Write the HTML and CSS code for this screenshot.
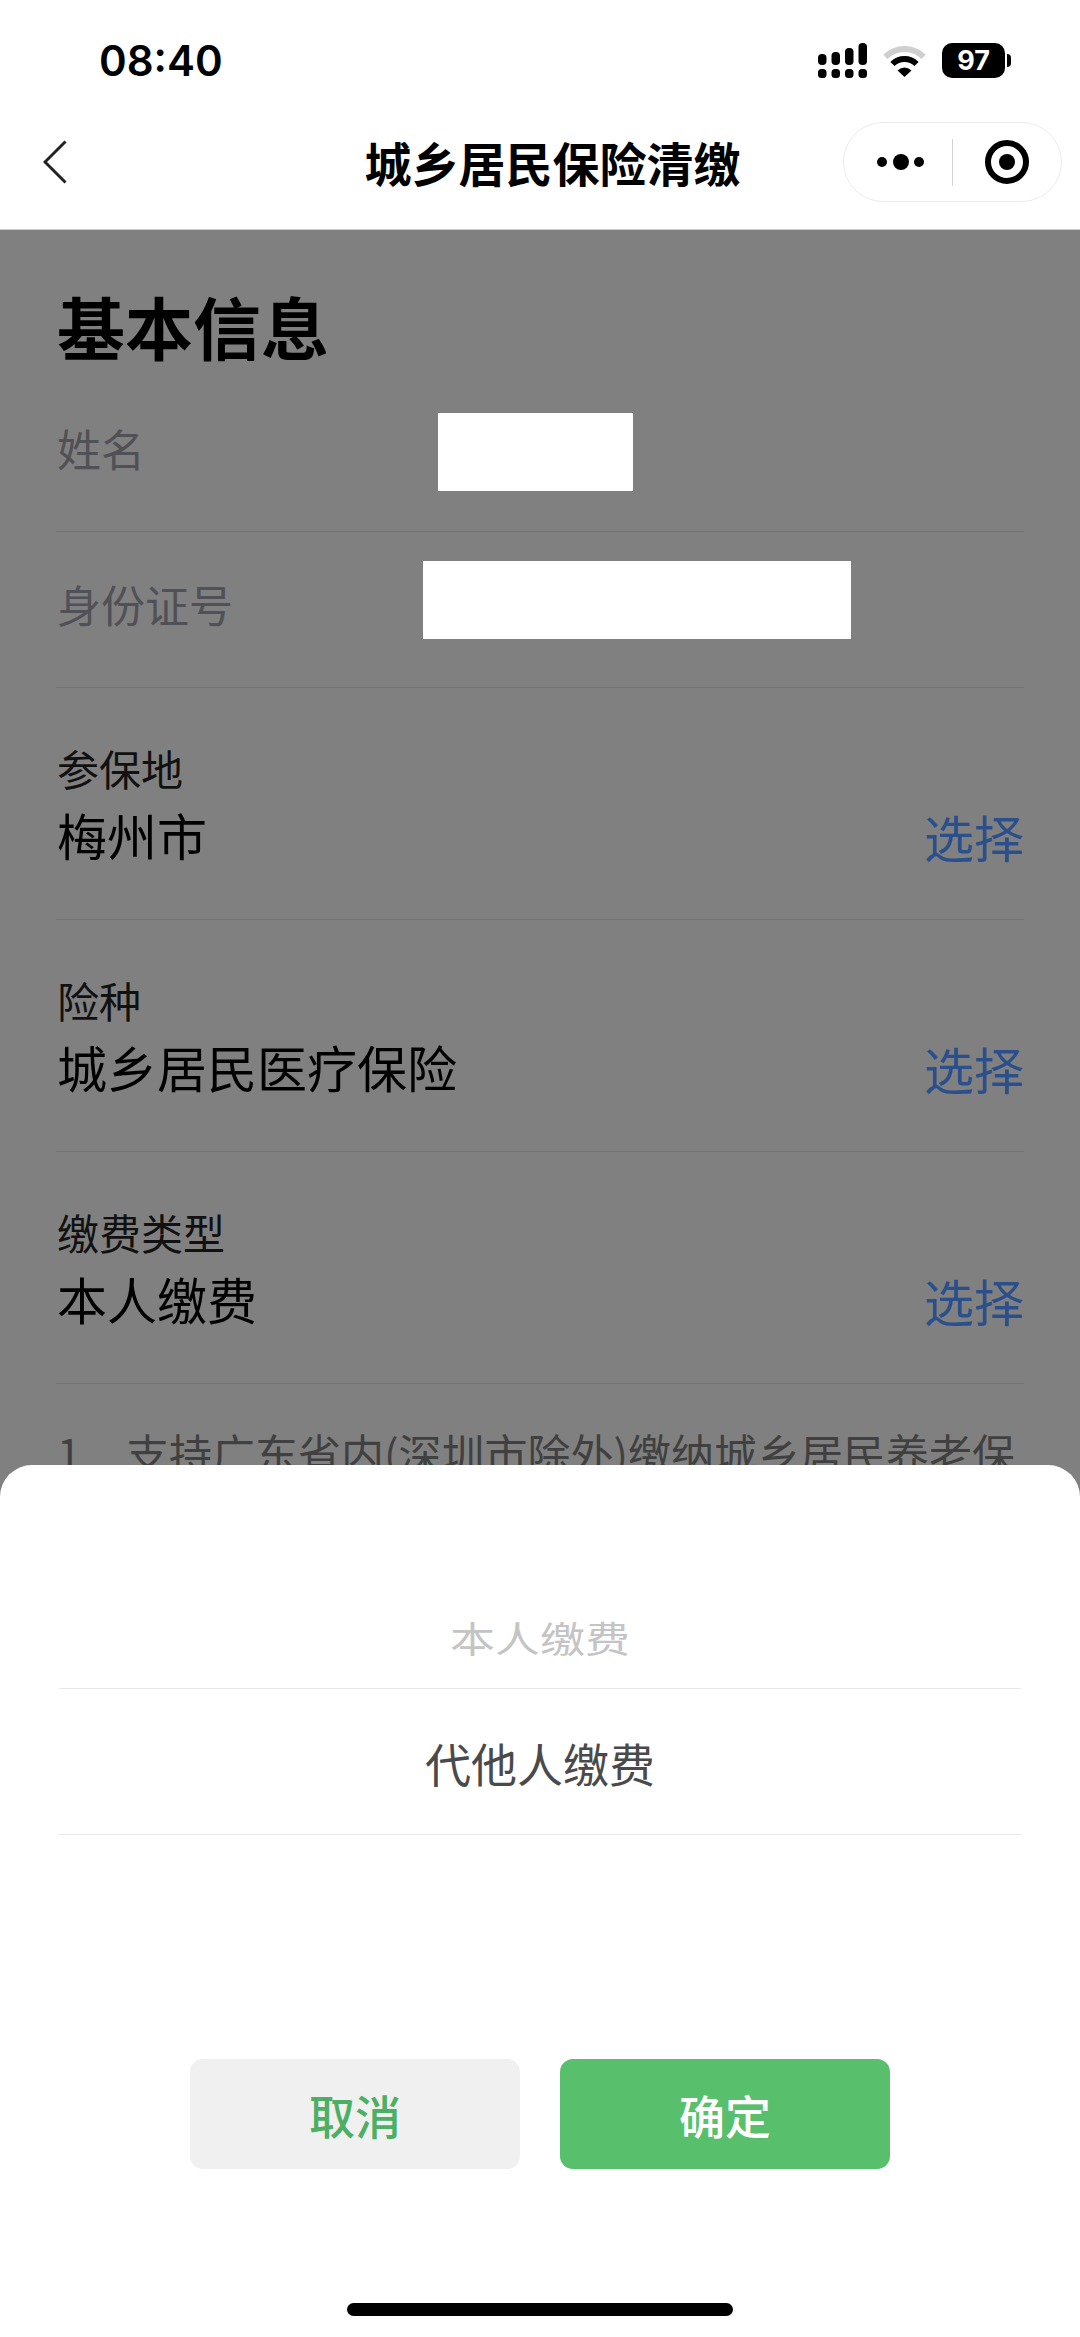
FILE: index.html
```html
<!DOCTYPE html>
<html lang="zh-CN">
<head>
<meta charset="utf-8">
<title>城乡居民保险清缴</title>
<link rel="stylesheet" href="styles.css">
</head>
<body>
<div class="screen">
  <header class="status">
    <span class="time">08:40</span>
    <div class="status-icons">
      <svg class="signal" viewBox="0 0 49 35" aria-hidden="true">
        <rect x="0" y="11" width="8.5" height="11" rx="4"/>
        <rect x="13.5" y="9" width="8.5" height="13" rx="4"/>
        <rect x="27" y="5" width="8.5" height="17" rx="4"/>
        <rect x="40.5" y="0" width="8.5" height="22" rx="4"/>
        <rect x="0" y="26" width="8.5" height="9" rx="3.5"/>
        <rect x="13.5" y="26" width="8.5" height="9" rx="3.5"/>
        <rect x="27" y="26" width="8.5" height="9" rx="3.5"/>
        <rect x="40.5" y="26" width="8.5" height="9" rx="3.5"/>
      </svg>
      <svg class="wifi" viewBox="0 0 43 32" aria-hidden="true">
        <path class="wifi-off" d="M2.4 11.9A27 27 0 0 1 40.6 11.9"/>
        <path class="wifi-on" d="M9.5 19A17 17 0 0 1 33.5 19"/>
        <path class="wifi-dot" d="M14.5 25.5Q21.5 19.5 28.5 25.5L21.5 32Z"/>
      </svg>
      <div class="battery"><span class="battery-level">97</span></div>
      <span class="battery-nub"></span>
    </div>
  </header>

  <nav class="nav">
    <div class="nav-left">
      <svg class="back" viewBox="0 0 24 44" aria-hidden="true"><path d="M22.5 1.5L2 22L22.5 42.5"/></svg>
    </div>
    <h1 class="nav-title">城乡居民保险清缴</h1>
    <div class="nav-right">
      <div class="capsule">
        <svg class="capsule-dots" viewBox="0 0 47 16" aria-hidden="true">
          <circle cx="5" cy="8" r="5"/><circle cx="24" cy="8" r="8"/><circle cx="42" cy="8" r="5"/>
        </svg>
        <span class="capsule-divider"></span>
        <svg class="capsule-target" viewBox="0 0 44 44" aria-hidden="true">
          <circle class="ring" cx="22" cy="22" r="19"/><circle cx="22" cy="22" r="8"/>
        </svg>
      </div>
    </div>
  </nav>

  <main class="content">
    <h2 class="section-title">基本信息</h2>

    <div class="info-row">
      <span class="info-label">姓名</span>
      <span class="mask mask-name"></span>
    </div>
    <div class="info-row">
      <span class="info-label">身份证号</span>
      <span class="mask mask-id"></span>
    </div>

    <div class="select-row">
      <div class="select-main">
        <div class="select-label">参保地</div>
        <div class="select-value">梅州市</div>
      </div>
      <span class="select-action">选择</span>
    </div>
    <div class="select-row">
      <div class="select-main">
        <div class="select-label">险种</div>
        <div class="select-value">城乡居民医疗保险</div>
      </div>
      <span class="select-action">选择</span>
    </div>
    <div class="select-row">
      <div class="select-main">
        <div class="select-label">缴费类型</div>
        <div class="select-value">本人缴费</div>
      </div>
      <span class="select-action">选择</span>
    </div>

    <p class="note"><span class="note-num">1.</span>支持广东省内(深圳市除外)缴纳城乡居民养老保</p>
  </main>

  <section class="sheet">
    <div class="picker">
      <div class="option option-faded"><span class="option-squash">本人缴费</span></div>
      <div class="option option-current">代他人缴费</div>
    </div>
    <div class="actions">
      <button class="btn btn-cancel">取消</button>
      <button class="btn btn-confirm">确定</button>
    </div>
    <div class="home-bar"></div>
  </section>
</div>
</body>
</html>
```

FILE: styles.css
```css
* { box-sizing: border-box; }
html, body { margin: 0; padding: 0; }
body {
  font-family: "Noto Sans CJK SC", "Noto Sans", sans-serif;
  background: #808080;
  color: #000;
}
.screen {
  position: relative;
  width: 1080px;
  height: 2337px;
  overflow: hidden;
  display: flex;
  flex-direction: column;
}

/* status bar */
.status {
  height: 110px;
  flex: none;
  background: #fff;
  display: flex;
  justify-content: space-between;
  align-items: flex-start;
  padding: 35px 69px 0 99px;
}
.time {
  font-family: Inter, "Liberation Sans", sans-serif;
  font-size: 42px;
  font-weight: 600;
  line-height: 52px;
}
.status-icons {
  display: flex;
  align-items: center;
  margin-top: 8px;
}
.signal { width: 49px; height: 35px; fill: #000; }
.wifi { width: 43px; height: 32px; margin: 0 16px; }
.wifi-off, .wifi-on { fill: none; stroke-width: 6; }
.wifi-off { stroke: #cfcfcf; }
.wifi-on { stroke: #000; }
.wifi-dot { fill: #000; }
.battery {
  width: 63px;
  height: 35px;
  border-radius: 10px;
  background: #000;
  display: flex;
  align-items: center;
  justify-content: center;
}
.battery-level {
  font-family: Inter, "Liberation Sans", sans-serif;
  font-size: 27px;
  font-weight: 700;
  line-height: 35px;
  color: #fff;
}
.battery-nub {
  width: 4px;
  height: 13px;
  margin-left: 2px;
  background: #000;
  border-radius: 0 4px 4px 0;
}

/* navigation */
.nav {
  height: 120px;
  flex: none;
  background: #fff;
  border-bottom: 1px solid #cfcfcf;
  display: grid;
  grid-template-columns: 1fr auto 1fr;
  align-items: center;
  padding: 0 18px 15px 43px;
}
.back { display: block; width: 24px; height: 44px; fill: none; stroke: #222; stroke-width: 3; }
.nav-title {
  margin: 0;
  font-size: 47px;
  font-weight: 700;
  line-height: 60px;
  letter-spacing: 0;
}
.nav-right { display: flex; justify-content: flex-end; }
.capsule {
  width: 219px;
  height: 80px;
  border: 1px solid #ececec;
  border-radius: 40px;
  display: flex;
  align-items: center;
  padding-left: 33px;
}
.capsule-dots { width: 47px; height: 16px; fill: #000; }
.capsule-divider { width: 1px; height: 47px; background: #d4d4d4; margin: 0 32px 0 28px; }
.capsule-target { width: 44px; height: 44px; fill: #000; }
.capsule-target .ring { fill: none; stroke: #000; stroke-width: 6; }

/* form */
.content {
  flex: 1;
  padding: 0 56px;
  background: #808080;
}
.section-title {
  margin: 0;
  height: 146px;
  padding: 61px 0 0 1px;
  font-size: 68px;
  font-weight: 700;
  line-height: 70px;
}
.info-row {
  height: 156px;
  border-bottom: 1px solid #727272;
  display: flex;
  align-items: flex-start;
  padding-left: 1px;
}
.info-label {
  font-size: 44px;
  line-height: 60px;
  margin-top: 42px;
  color: #505156;
}
.mask { display: block; height: 78px; background: #fff; }
.mask-name { width: 195px; margin: 37px 0 0 293px; }
.mask-id { width: 428px; margin: 29px 0 0 190px; }

.select-row {
  height: 232px;
  border-bottom: 1px solid #727272;
  display: flex;
  justify-content: space-between;
  align-items: flex-start;
  padding: 55px 0 0 1px;
}
.select-label { font-size: 42px; line-height: 50px; color: #111; }
.select-value { font-size: 50px; line-height: 66px; margin-top: 8px; color: #000; }
.select-action { font-size: 50px; line-height: 66px; margin-top: 60px; color: #2a4f8a; }

.note {
  margin: 38px 0 0;
  padding-left: 1px;
  font-size: 43px;
  line-height: 60px;
  color: #404040;
  white-space: nowrap;
}
.note-num { display: inline-block; width: 69px; }

/* bottom sheet */
.sheet {
  position: absolute;
  left: 0;
  right: 0;
  bottom: 0;
  height: 872px;
  background: #fff;
  border-radius: 32px 32px 0 0;
  display: flex;
  flex-direction: column;
  padding-top: 78px;
}
.picker { margin: 0 59px; }
.option {
  display: flex;
  align-items: center;
  justify-content: center;
  border-bottom: 1px solid #e8e8e8;
}
.option-faded {
  height: 146px;
  padding-top: 44px;
  font-size: 45px;
  color: #c4c4c4;
}
.option-squash { display: block; line-height: 60px; transform: scaleY(0.8); }
.option-current {
  height: 146px;
  font-size: 46px;
  color: #4a4a4a;
}
.actions {
  display: flex;
  justify-content: center;
  gap: 40px;
  margin-top: 224px;
}
.btn {
  width: 330px;
  height: 110px;
  border: 0;
  border-radius: 13px;
  font-family: inherit;
  font-size: 46px;
  font-weight: 500;
  padding: 0;
}
.btn-cancel { background: #f0f0f0; color: #4caf64; }
.btn-confirm { background: #58c06c; color: #fff; }
.home-bar {
  width: 386px;
  height: 13px;
  margin: 134px auto 0;
  border-radius: 7px;
  background: #000;
}
```
